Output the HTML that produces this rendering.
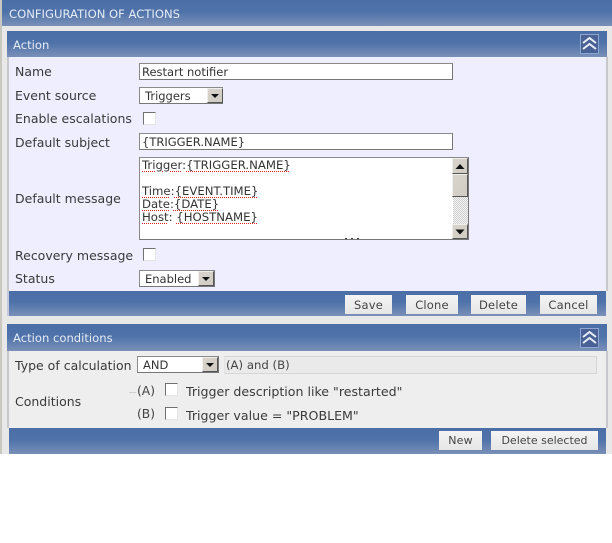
<!DOCTYPE html>
<html><head><meta charset="utf-8"><style>
html,body{margin:0;padding:0;background:#fff}
#p{position:relative;width:612px;height:543px;overflow:hidden;background:#fff;font-family:"DejaVu Sans","Liberation Sans",sans-serif;font-size:11.5px;color:#333}
#p div,#p span.t{position:absolute;white-space:pre;box-sizing:border-box}
.bar{background:linear-gradient(#4b6ea6 0%,#4e72a9 45%,#7a90b8 100%)}
.hd{color:#e6ecf6;font-size:11.6px}
.lb{left:15px;font-size:12.5px;line-height:14px;color:#3a3a3a}
.in{background:#fff;border:1px solid #8a8a8a;border-right-color:#777;border-bottom-color:#777;line-height:17px;padding-left:2px;color:#333;font-size:11.5px}
.cb{width:13px;height:13px;background:#fff;border:1px solid;border-color:#6f6f6f #e4e4e4 #e4e4e4 #6f6f6f}
.btn{background:linear-gradient(#f4f4f4,#e6e6e6);color:#444;font-size:11.5px;line-height:20px;text-align:center;height:19px;top:0;letter-spacing:.2px}
.sb{width:16px;background:linear-gradient(135deg,#d8d4cc,#d0ccc4);border:1px solid;border-color:#eeeeea #555 #555 #eeeeea}
.col{width:19px;height:20px;background:#4a6195;border:1px solid #8ea6d2}
.sq{text-decoration:underline dotted #d22 1px;text-underline-offset:2px}
</style></head><body><div id="p">
<div style="left:0;top:0;width:612px;height:454px;background:#e8e8e8"></div>
<div style="left:0;top:0;width:2px;height:454px;background:#c8c8c0"></div>
<div class="bar" style="left:2px;top:0;width:610px;height:26px"></div>
<div class="hd" style="left:9px;top:7px;line-height:14px">CONFIGURATION OF ACTIONS</div>

<div style="left:7px;top:31px;width:2px;height:285px;background:#c4cadb"></div>
<div class="bar" style="left:7px;top:31px;width:600px;height:26px"></div>
<div style="left:9px;top:57px;width:597px;height:234px;background:#eeeefe"></div>
<div style="left:606px;top:57px;width:2px;height:234px;background:#c8c8cc"></div>
<div style="left:7px;top:57px;width:2px;height:234px;background:#c8c8cc"></div>
<div class="bar" style="left:9px;top:291px;width:597px;height:25px"></div>
<div class="hd" style="left:13px;top:38px;line-height:14px">Action</div>
<div class="col" style="left:580px;top:34px"><svg width="17" height="18" style="display:block"><path d="M2 8 L8.5 3 L15 8 M2 14 L8.5 9 L15 14" fill="none" stroke="#e8eef8" stroke-width="2"/></svg></div>

<div class="lb" style="top:65px">Name</div>
<div class="in" style="left:139px;top:63px;width:314px;height:17px">Restart notifier</div>
<div class="lb" style="top:89px">Event source</div>
<div class="in" style="left:139px;top:87px;width:84px;height:17px;padding-left:5px">Triggers</div>
<div class="sb" style="left:207px;top:88px;height:15px"><svg width="14" height="13" style="display:block"><path d="M3 5H11L7 9Z" fill="#111"/></svg></div>
<div class="lb" style="top:112px">Enable escalations</div>
<div class="cb" style="left:143px;top:112px"></div>
<div class="lb" style="top:136px">Default subject</div>
<div class="in" style="left:139px;top:133px;width:314px;height:17px">{TRIGGER.NAME}</div>

<div class="lb" style="top:192px">Default message</div>
<div class="in" style="left:139px;top:157px;width:330px;height:83px;overflow:hidden"></div>
<div style="left:142px;top:159px;font-size:11.7px;line-height:13px;color:#333"><span class="sq">Trigger</span>:<span class="sq">{TRIGGER.NAME}</span>

<span class="sq">Time</span>:<span class="sq">{EVENT.TIME}</span>
<span class="sq">Date</span>:<span class="sq">{DATE}</span>
<span class="sq">Host</span>: <span class="sq">{HOSTNAME}</span></div>
<div style="left:453px;top:158px;width:15px;height:81px;background:repeating-conic-gradient(#cfcfcf 0 25%,#f4f4f4 0 50%) 0 0/2px 2px"></div>
<div class="sb" style="left:452px;top:158px;height:16px"><svg width="14" height="14" style="display:block"><path d="M2.5 10H11.5L7 5Z" fill="#111"/></svg></div>
<div class="sb" style="left:452px;top:174px;height:23px"></div>
<div class="sb" style="left:452px;top:224px;height:15px"><svg width="14" height="13" style="display:block"><path d="M2.5 4.5H11.5L7 9.5Z" fill="#111"/></svg></div>
<div style="left:345px;top:238px;width:15px;height:1px;background:repeating-linear-gradient(90deg,#333 0 2px,transparent 2px 6px)"></div>

<div class="lb" style="top:249px">Recovery message</div>
<div class="cb" style="left:143px;top:248px"></div>
<div class="lb" style="top:272px">Status</div>
<div class="in" style="left:139px;top:270px;width:76px;height:17px;padding-left:5px">Enabled</div>
<div class="sb" style="left:198px;top:271px;height:15px"><svg width="14" height="13" style="display:block"><path d="M3 5H11L7 9Z" fill="#111"/></svg></div>

<div class="btn" style="left:345px;top:295px;width:47px">Save</div>
<div class="btn" style="left:406px;top:295px;width:52px">Clone</div>
<div class="btn" style="left:471px;top:295px;width:55px">Delete</div>
<div class="btn" style="left:540px;top:295px;width:57px">Cancel</div>

<div class="bar" style="left:7px;top:324px;width:600px;height:27px"></div>
<div class="hd" style="left:13px;top:331px;line-height:14px">Action conditions</div>
<div class="col" style="left:580px;top:328px"><svg width="17" height="18" style="display:block"><path d="M2 8 L8.5 3 L15 8 M2 14 L8.5 9 L15 14" fill="none" stroke="#e8eef8" stroke-width="2"/></svg></div>
<div style="left:7px;top:351px;width:2px;height:77px;background:#c8c8cc"></div>
<div style="left:9px;top:351px;width:597px;height:77px;background:#eeeeee"></div>
<div style="left:606px;top:351px;width:2px;height:77px;background:#c8c8cc"></div>
<div class="lb" style="top:359px">Type of calculation</div>
<div class="in" style="left:137px;top:356px;width:82px;height:17px;padding-left:5px">AND</div>
<div class="sb" style="left:202px;top:357px;height:15px"><svg width="14" height="13" style="display:block"><path d="M3 5H11L7 9Z" fill="#111"/></svg></div>
<div style="left:224px;top:356px;width:373px;height:18px;background:#eaeaea;border:1px solid #d6d6d6;border-left-color:#e4e4e4;padding-left:1px;font-size:11.7px;line-height:16px;color:#444">(A) and (B)</div>
<div class="lb" style="top:395px">Conditions</div>
<div style="left:129px;top:392px;width:7px;height:1px;background:#cfcfcf"></div>
<div style="left:137px;top:384px;font-size:12.3px;line-height:14px;color:#444">(A)</div>
<div class="cb" style="left:165px;top:383px"></div>
<div style="left:186px;top:385px;font-size:12.6px;line-height:14px;color:#3a3a3a">Trigger description like "restarted"</div>
<div style="left:137px;top:407px;font-size:12.3px;line-height:14px;color:#444">(B)</div>
<div class="cb" style="left:165px;top:407px"></div>
<div style="left:186px;top:409px;font-size:12.6px;line-height:14px;color:#3a3a3a">Trigger value = "PROBLEM"</div>

<div class="bar" style="left:9px;top:428px;width:597px;height:26px"></div>
<div class="btn" style="left:439px;top:431px;width:43px;font-size:11px">New</div>
<div class="btn" style="left:491px;top:431px;width:107px;font-size:11px;letter-spacing:0">Delete selected</div>
</div></body></html>
